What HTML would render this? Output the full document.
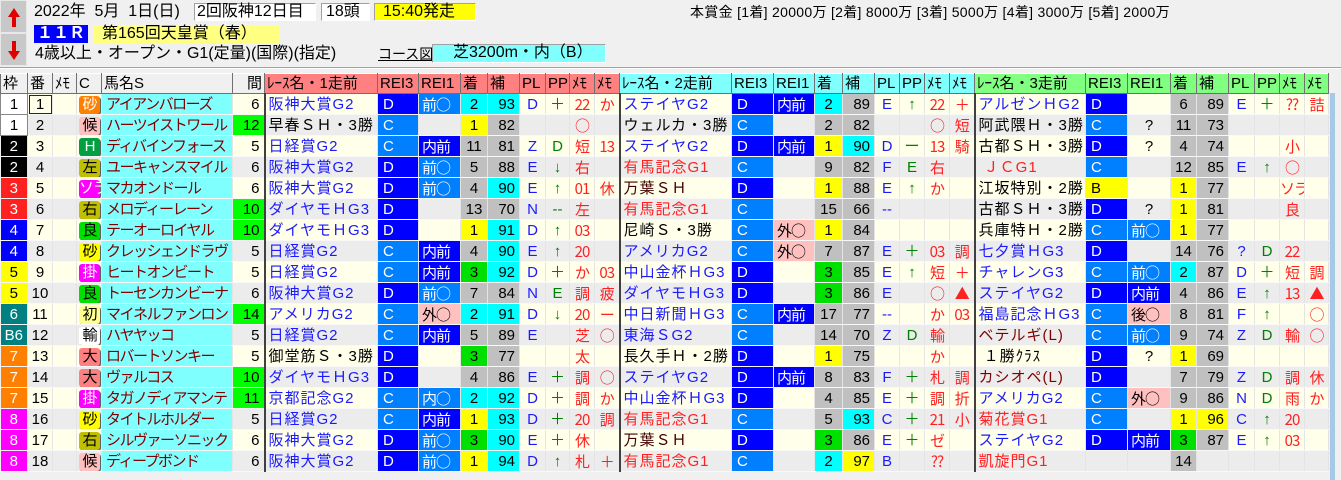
<!DOCTYPE html>
<html><head><meta charset="utf-8"><style>
*{margin:0;padding:0;box-sizing:border-box}
body{width:1341px;height:480px;overflow:hidden;background:#f0f0f0;font-family:"Liberation Sans","Noto Sans CJK JP",sans-serif;font-size:15px;color:#000;position:relative}
.a{position:absolute;white-space:nowrap}
.box{position:absolute;border-top:1px solid #a0a0a0;border-left:1px solid #a0a0a0;border-bottom:1px solid #fff;border-right:1px solid #fff;line-height:16px;white-space:nowrap;font-size:16px}
table{position:absolute;left:0;top:73px;width:1328px;table-layout:fixed;border-collapse:collapse}
td,th{height:21px;line-height:19px;padding:0 2px;white-space:nowrap;overflow:hidden;border-right:1px solid #e4e4e4;border-bottom:1px solid #f8f8f8;font-weight:normal}
th{height:20px;text-align:left;border:1px solid #707070;border-top:1px solid #fff;font-size:15px}
tr.o td{background:#ffffea}tr.e td{background:#ececec}
th.h0{background:#f0f0f0}th.h1{background:#ff8080}th.h2{background:#80ffff}th.h3{background:#80ff80}
td.c{text-align:center}td.r{text-align:right;padding-right:4px}
tr td.w1{background:#fff;text-align:center;border:1px solid #888}
tr td.w2{background:#000;color:#fff;text-align:center}
tr td.w3{background:#ff2020;color:#fff;text-align:center}
tr td.w4{background:#0000ff;color:#fff;text-align:center}
tr td.w5{background:#ffff00;text-align:center}
tr td.w6{background:#008080;color:#fff;text-align:center}
tr td.w7{background:#ff8000;color:#fff;text-align:center}
tr td.w8{background:#ff00ff;color:#fff;text-align:center}
tr td.n{background:#80ffff;color:#800000;letter-spacing:-1.5px;padding-left:4px}
tr td.g{background:#00ff00}
td.rn{border-left:2px solid #404040;letter-spacing:1px;padding-left:3px}
.bl{color:#1a1aff}.rd{color:#ff2020}.dr{color:#800000}.br{color:#400000}
tr td.D{background:#0000ff;color:#fff;padding-left:5px}
tr td.C{background:#0080ff;color:#fff;padding-left:5px}
tr td.B{background:#ffff00;padding-left:5px}
tr td.m,tr td.u,tr td.s{font-family:"Noto Sans CJK JP",sans-serif;padding-left:3px;letter-spacing:-1px}
tr td.m{background:#0080ff;color:#fff}
tr td.u{background:#0000ff;color:#fff}
tr td.s{background:#ffc0c0}
tr td.gy{background:#c0c0c0}tr td.cy{background:#00ffff}tr td.ye{background:#ffff00}tr td.gr{background:#00e000}
td.pl{color:#1a1aff;text-align:center}td.pp{color:#008000;text-align:center}td.me{color:#ff2020;text-align:center;padding:0;font-family:"Noto Sans CJK JP",sans-serif;letter-spacing:-1px}
.bd{display:inline-block;width:21px;height:18px;line-height:17px;text-align:center;border-radius:3px;box-shadow:1px 1px 0 #606060;font-size:15px;letter-spacing:-1px}
.b1{background:#ff8000;color:#fff}.b2{background:#ffc0c0;color:#000}.b3{background:#00a040;color:#fff}.b4{background:#c0c000}.b5{background:#ff00ff;color:#fff}.b6{background:#00e000}.b7{background:#ffff00}.b8{background:#ffff90}.b9{background:#fff}.b10{background:#ff8080}
</style></head><body>
<div class="a" style="left:0;top:0;width:27px;height:33px;background:#c8c8c8;border:1px solid #e8e8e8"><svg width="27" height="33"><path d="M13 7 L19 16 L15 16 L15 26 L11 26 L11 16 L7 16 Z" fill="#e00000"/></svg></div>
<div class="a" style="left:0;top:33px;width:27px;height:33px;background:#c8c8c8;border:1px solid #e8e8e8"><svg width="27" height="33"><path d="M13 26 L19 17 L15 17 L15 7 L11 7 L11 17 L7 17 Z" fill="#e00000"/></svg></div>
<div class="a" style="left:34px;top:3px;line-height:17px;font-size:16px">2022年&nbsp; 5月&nbsp; 1日(日)</div>
<div class="box" style="left:194px;top:3px;width:122px;height:18px;background:#fff;padding-left:2px">2回阪神12日目</div>
<div class="box" style="left:321px;top:3px;width:49px;height:18px;background:#fff;padding-left:4px">18頭</div>
<div class="box" style="left:374px;top:3px;width:102px;height:18px;background:#ffff00;padding-left:8px">15:40発走</div>
<div class="a" style="left:34px;top:25px;width:54px;height:18px;background:#0000ff;color:#fff;font-weight:bold;line-height:18px;padding-left:3px;font-size:16px">１１Ｒ</div>
<div class="a" style="left:94px;top:25px;width:185px;height:18px;background:#ffff80;line-height:18px;padding-left:8px;font-size:16px">第165回天皇賞（春）</div>
<div class="a" style="left:35px;top:45px;line-height:17px;font-size:16px">4歳以上・オープン・G1(定量)(国際)(指定)</div>
<div class="a" style="left:378px;top:47px;font-size:14px;text-decoration:underline;line-height:15px">コース図</div>
<div class="box" style="left:432px;top:44px;width:174px;height:19px;background:#80ffff;padding-left:20px">芝3200m・内（B）</div>
<div class="a" style="left:690px;top:4px;font-size:14px;line-height:16px;letter-spacing:0.3px">本賞金 [1着] 20000万 [2着] 8000万 [3着] 5000万 [4着] 3000万 [5着] 2000万</div>
<div class="a" style="left:0;top:67px;width:1341px;height:2px;border-top:1px solid #a0a0a0;border-bottom:1px solid #fff"></div>
<div class="a" style="left:1328px;top:73px;width:13px;height:407px;background:#f0f0f0"><div style="position:absolute;left:2px;top:20px;width:5px;height:387px;background:#a8c8e8"></div></div>
<table>
<colgroup><col style="width:27px"><col style="width:25px"><col style="width:24px"><col style="width:25px"><col style="width:131px"><col style="width:32px"><col style="width:113px"><col style="width:41px"><col style="width:42px"><col style="width:27px"><col style="width:32px"><col style="width:26px"><col style="width:24px"><col style="width:25px"><col style="width:25px"><col style="width:112px"><col style="width:42px"><col style="width:41px"><col style="width:28px"><col style="width:32px"><col style="width:25px"><col style="width:25px"><col style="width:25px"><col style="width:25px"><col style="width:111px"><col style="width:42px"><col style="width:43px"><col style="width:26px"><col style="width:32px"><col style="width:26px"><col style="width:25px"><col style="width:25px"><col style="width:24px"></colgroup>
<tr><th class="h0">枠</th><th class="h0">番</th><th class="h0">ﾒﾓ</th><th class="h0">C</th><th class="h0">馬名S</th><th class="h0" style="text-align:right">間</th><th class="h1">ﾚｰｽ名・1走前</th><th class="h1">REI3</th><th class="h1">REI1</th><th class="h1">着</th><th class="h1">補</th><th class="h1">PL</th><th class="h1">PP</th><th class="h1">ﾒﾓ</th><th class="h1">ﾒﾓ</th><th class="h2">ﾚｰｽ名・2走前</th><th class="h2">REI3</th><th class="h2">REI1</th><th class="h2">着</th><th class="h2">補</th><th class="h2">PL</th><th class="h2">PP</th><th class="h2">ﾒﾓ</th><th class="h2">ﾒﾓ</th><th class="h3">ﾚｰｽ名・3走前</th><th class="h3">REI3</th><th class="h3">REI1</th><th class="h3">着</th><th class="h3">補</th><th class="h3">PL</th><th class="h3">PP</th><th class="h3">ﾒﾓ</th><th class="h3">ﾒﾓ</th></tr>
<tr class="o"><td class="w1">1</td><td class="c" style="outline:1px solid #800000;outline-offset:-2px">1</td><td></td><td><span class="bd b1">砂</span></td><td class="n">アイアンバローズ</td><td class="r">6</td><td class="rn bl">阪神大賞G2</td><td class="D">D</td><td class="m">前○</td><td class="c cy">2</td><td class="r cy">93</td><td class="pl">D</td><td class="pp">＋</td><td class="me">22</td><td class="me">か</td><td class="rn bl">ステイヤG2</td><td class="D">D</td><td class="u">内前</td><td class="c cy">2</td><td class="r gy">89</td><td class="pl">E</td><td class="pp">↑</td><td class="me">22</td><td class="me">＋</td><td class="rn bl">アルゼンＨG2</td><td class="D">D</td><td></td><td class="c gy">6</td><td class="r gy">89</td><td class="pl">E</td><td class="pp">＋</td><td class="me">??</td><td class="me">詰</td></tr>
<tr class="e"><td class="w1">1</td><td class="c">2</td><td></td><td><span class="bd b2">候</span></td><td class="n">ハーツイストワール</td><td class="r g">12</td><td class="rn">早春ＳＨ・3勝</td><td class="C">C</td><td></td><td class="c ye">1</td><td class="r gy">82</td><td></td><td></td><td class="me">○</td><td></td><td class="rn">ウェルカ・3勝</td><td class="C">C</td><td></td><td class="c gy">2</td><td class="r gy">82</td><td></td><td></td><td class="me">○</td><td class="me">短</td><td class="rn">阿武隈Ｈ・3勝</td><td class="C">C</td><td class="c">?</td><td class="c gy">11</td><td class="r gy">73</td><td></td><td></td><td></td><td></td></tr>
<tr class="o"><td class="w2">2</td><td class="c">3</td><td></td><td><span class="bd b3">H</span></td><td class="n">ディバインフォース</td><td class="r">5</td><td class="rn bl">日経賞G2</td><td class="C">C</td><td class="u">内前</td><td class="c gy">11</td><td class="r gy">81</td><td class="pl">Z</td><td class="pp">D</td><td class="me">短</td><td class="me">13</td><td class="rn bl">ステイヤG2</td><td class="D">D</td><td class="u">内前</td><td class="c ye">1</td><td class="r cy">90</td><td class="pl">D</td><td class="pp">ー</td><td class="me">13</td><td class="me">騎</td><td class="rn">古都ＳＨ・3勝</td><td class="D">D</td><td class="c">?</td><td class="c gy">4</td><td class="r gy">74</td><td></td><td></td><td class="me">小</td><td></td></tr>
<tr class="e"><td class="w2">2</td><td class="c">4</td><td></td><td><span class="bd b4">左</span></td><td class="n">ユーキャンスマイル</td><td class="r">6</td><td class="rn bl">阪神大賞G2</td><td class="D">D</td><td class="m">前○</td><td class="c gy">5</td><td class="r gy">88</td><td class="pl">E</td><td class="pp">↓</td><td class="me">右</td><td></td><td class="rn rd">有馬記念G1</td><td class="C">C</td><td></td><td class="c gy">9</td><td class="r gy">82</td><td class="pl">F</td><td class="pp">E</td><td class="me">右</td><td></td><td class="rn rd">&nbsp;ＪＣG1</td><td class="C">C</td><td></td><td class="c gy">12</td><td class="r gy">85</td><td class="pl">E</td><td class="pp">↑</td><td class="me">○</td><td></td></tr>
<tr class="o"><td class="w3">3</td><td class="c">5</td><td></td><td><span class="bd b5">ソラ</span></td><td class="n">マカオンドール</td><td class="r">6</td><td class="rn bl">阪神大賞G2</td><td class="D">D</td><td class="m">前○</td><td class="c gy">4</td><td class="r cy">90</td><td class="pl">E</td><td class="pp">↑</td><td class="me">01</td><td class="me">休</td><td class="rn br">万葉ＳＨ</td><td class="D">D</td><td></td><td class="c ye">1</td><td class="r gy">88</td><td class="pl">E</td><td class="pp">↑</td><td class="me">か</td><td></td><td class="rn">江坂特別・2勝</td><td class="B">B</td><td></td><td class="c ye">1</td><td class="r gy">77</td><td></td><td></td><td class="me">ソラ</td><td></td></tr>
<tr class="e"><td class="w3">3</td><td class="c">6</td><td></td><td><span class="bd b4">右</span></td><td class="n">メロディーレーン</td><td class="r g">10</td><td class="rn bl">ダイヤモＨG3</td><td class="D">D</td><td></td><td class="c gy">13</td><td class="r gy">70</td><td class="pl">N</td><td class="pp">--</td><td class="me">左</td><td></td><td class="rn rd">有馬記念G1</td><td class="C">C</td><td></td><td class="c gy">15</td><td class="r gy">66</td><td class="pl">--</td><td></td><td></td><td></td><td class="rn">古都ＳＨ・3勝</td><td class="D">D</td><td class="c">?</td><td class="c ye">1</td><td class="r gy">81</td><td></td><td></td><td class="me">良</td><td></td></tr>
<tr class="o"><td class="w4">4</td><td class="c">7</td><td></td><td><span class="bd b6">良</span></td><td class="n">テーオーロイヤル</td><td class="r g">10</td><td class="rn bl">ダイヤモＨG3</td><td class="D">D</td><td></td><td class="c ye">1</td><td class="r cy">91</td><td class="pl">D</td><td class="pp">↑</td><td class="me">03</td><td></td><td class="rn">尼崎Ｓ・3勝</td><td class="C">C</td><td class="s">外○</td><td class="c ye">1</td><td class="r gy">84</td><td></td><td></td><td></td><td></td><td class="rn">兵庫特Ｈ・2勝</td><td class="C">C</td><td class="m">前○</td><td class="c ye">1</td><td class="r gy">77</td><td></td><td></td><td></td><td></td></tr>
<tr class="e"><td class="w4">4</td><td class="c">8</td><td></td><td><span class="bd b7">砂</span></td><td class="n">クレッシェンドラヴ</td><td class="r">5</td><td class="rn bl">日経賞G2</td><td class="C">C</td><td class="u">内前</td><td class="c gy">4</td><td class="r cy">90</td><td class="pl">E</td><td class="pp">↑</td><td class="me">20</td><td></td><td class="rn bl">アメリカG2</td><td class="C">C</td><td class="s">外○</td><td class="c gy">7</td><td class="r gy">87</td><td class="pl">E</td><td class="pp">＋</td><td class="me">03</td><td class="me">調</td><td class="rn bl">七夕賞ＨG3</td><td class="D">D</td><td></td><td class="c gy">14</td><td class="r gy">76</td><td class="pl">?</td><td class="pp">D</td><td class="me">22</td><td></td></tr>
<tr class="o"><td class="w5">5</td><td class="c">9</td><td></td><td><span class="bd b5">掛</span></td><td class="n">ヒートオンビート</td><td class="r">5</td><td class="rn bl">日経賞G2</td><td class="C">C</td><td class="u">内前</td><td class="c gr">3</td><td class="r cy">92</td><td class="pl">D</td><td class="pp">＋</td><td class="me">か</td><td class="me">03</td><td class="rn bl">中山金杯ＨG3</td><td class="D">D</td><td></td><td class="c gr">3</td><td class="r gy">85</td><td class="pl">E</td><td class="pp">↑</td><td class="me">短</td><td class="me">＋</td><td class="rn bl">チャレンG3</td><td class="C">C</td><td class="m">前○</td><td class="c cy">2</td><td class="r gy">87</td><td class="pl">D</td><td class="pp">＋</td><td class="me">短</td><td class="me">調</td></tr>
<tr class="e"><td class="w5">5</td><td class="c">10</td><td></td><td><span class="bd b6">良</span></td><td class="n">トーセンカンビーナ</td><td class="r">6</td><td class="rn bl">阪神大賞G2</td><td class="D">D</td><td class="m">前○</td><td class="c gy">7</td><td class="r gy">84</td><td class="pl">N</td><td class="pp">E</td><td class="me">調</td><td class="me">疲</td><td class="rn bl">ダイヤモＨG3</td><td class="D">D</td><td></td><td class="c gr">3</td><td class="r gy">86</td><td class="pl">E</td><td></td><td class="me">○</td><td class="me">▲</td><td class="rn bl">ステイヤG2</td><td class="D">D</td><td class="u">内前</td><td class="c gy">4</td><td class="r gy">86</td><td class="pl">E</td><td class="pp">↑</td><td class="me">13</td><td class="me">▲</td></tr>
<tr class="o"><td class="w6">6</td><td class="c">11</td><td></td><td><span class="bd b8">初</span></td><td class="n">マイネルファンロン</td><td class="r g">14</td><td class="rn bl">アメリカG2</td><td class="C">C</td><td class="s">外○</td><td class="c cy">2</td><td class="r cy">91</td><td class="pl">D</td><td class="pp">↓</td><td class="me">20</td><td class="me">ー</td><td class="rn bl">中日新聞ＨG3</td><td class="C">C</td><td class="u">内前</td><td class="c gy">17</td><td class="r gy">77</td><td class="pl">--</td><td></td><td class="me">か</td><td class="me">03</td><td class="rn bl">福島記念ＨG3</td><td class="C">C</td><td class="s">後○</td><td class="c gy">8</td><td class="r gy">81</td><td class="pl">F</td><td class="pp">↑</td><td></td><td class="me">○</td></tr>
<tr class="e"><td class="w6">B6</td><td class="c">12</td><td></td><td><span class="bd b9">輸</span></td><td class="n">ハヤヤッコ</td><td class="r">5</td><td class="rn bl">日経賞G2</td><td class="C">C</td><td class="u">内前</td><td class="c gy">5</td><td class="r gy">89</td><td class="pl">E</td><td></td><td class="me">芝</td><td class="me">○</td><td class="rn bl">東海ＳG2</td><td class="C">C</td><td></td><td class="c gy">14</td><td class="r gy">70</td><td class="pl">Z</td><td class="pp">D</td><td class="me">輸</td><td></td><td class="rn dr">ベテルギ(L)</td><td class="C">C</td><td class="m">前○</td><td class="c gy">9</td><td class="r gy">74</td><td class="pl">Z</td><td class="pp">D</td><td class="me">輸</td><td class="me">○</td></tr>
<tr class="o"><td class="w7">7</td><td class="c">13</td><td></td><td><span class="bd b10">大</span></td><td class="n">ロバートソンキー</td><td class="r">5</td><td class="rn">御堂筋Ｓ・3勝</td><td class="D">D</td><td></td><td class="c gr">3</td><td class="r gy">77</td><td></td><td></td><td class="me">太</td><td></td><td class="rn">長久手Ｈ・2勝</td><td class="D">D</td><td></td><td class="c ye">1</td><td class="r gy">75</td><td></td><td></td><td class="me">か</td><td></td><td class="rn">&nbsp;１勝ｸﾗｽ</td><td class="D">D</td><td class="c">?</td><td class="c ye">1</td><td class="r gy">69</td><td></td><td></td><td></td><td></td></tr>
<tr class="e"><td class="w7">7</td><td class="c">14</td><td></td><td><span class="bd b10">大</span></td><td class="n">ヴァルコス</td><td class="r g">10</td><td class="rn bl">ダイヤモＨG3</td><td class="D">D</td><td></td><td class="c gy">4</td><td class="r gy">86</td><td class="pl">E</td><td class="pp">＋</td><td class="me">調</td><td class="me">○</td><td class="rn bl">ステイヤG2</td><td class="D">D</td><td class="u">内前</td><td class="c gy">8</td><td class="r gy">83</td><td class="pl">F</td><td class="pp">＋</td><td class="me">札</td><td class="me">調</td><td class="rn dr">カシオペ(L)</td><td class="D">D</td><td></td><td class="c gy">7</td><td class="r gy">79</td><td class="pl">Z</td><td class="pp">D</td><td class="me">調</td><td class="me">休</td></tr>
<tr class="o"><td class="w7">7</td><td class="c">15</td><td></td><td><span class="bd b5">掛</span></td><td class="n">タガノディアマンテ</td><td class="r g">11</td><td class="rn bl">京都記念G2</td><td class="C">C</td><td class="m">内○</td><td class="c cy">2</td><td class="r cy">92</td><td class="pl">D</td><td class="pp">＋</td><td class="me">調</td><td class="me">か</td><td class="rn bl">中山金杯ＨG3</td><td class="D">D</td><td></td><td class="c gy">4</td><td class="r gy">85</td><td class="pl">E</td><td class="pp">＋</td><td class="me">調</td><td class="me">折</td><td class="rn bl">アメリカG2</td><td class="C">C</td><td class="s">外○</td><td class="c gy">9</td><td class="r gy">86</td><td class="pl">N</td><td class="pp">D</td><td class="me">雨</td><td class="me">か</td></tr>
<tr class="e"><td class="w8">8</td><td class="c">16</td><td></td><td><span class="bd b7">砂</span></td><td class="n">タイトルホルダー</td><td class="r">5</td><td class="rn bl">日経賞G2</td><td class="C">C</td><td class="u">内前</td><td class="c ye">1</td><td class="r cy">93</td><td class="pl">D</td><td class="pp">＋</td><td class="me">20</td><td class="me">調</td><td class="rn rd">有馬記念G1</td><td class="C">C</td><td></td><td class="c gy">5</td><td class="r cy">93</td><td class="pl">C</td><td class="pp">＋</td><td class="me">21</td><td class="me">小</td><td class="rn rd">菊花賞G1</td><td class="C">C</td><td></td><td class="c ye">1</td><td class="r ye">96</td><td class="pl">C</td><td class="pp">↑</td><td class="me">20</td><td></td></tr>
<tr class="o"><td class="w8">8</td><td class="c">17</td><td></td><td><span class="bd b4">右</span></td><td class="n">シルヴァーソニック</td><td class="r">6</td><td class="rn bl">阪神大賞G2</td><td class="D">D</td><td class="m">前○</td><td class="c gr">3</td><td class="r cy">90</td><td class="pl">E</td><td class="pp">＋</td><td class="me">休</td><td></td><td class="rn br">万葉ＳＨ</td><td class="D">D</td><td></td><td class="c gr">3</td><td class="r gy">86</td><td class="pl">E</td><td class="pp">＋</td><td class="me">ゼ</td><td></td><td class="rn bl">ステイヤG2</td><td class="D">D</td><td class="u">内前</td><td class="c gr">3</td><td class="r gy">87</td><td class="pl">E</td><td class="pp">↑</td><td class="me">03</td><td></td></tr>
<tr class="e"><td class="w8">8</td><td class="c">18</td><td></td><td><span class="bd b2">候</span></td><td class="n">ディープボンド</td><td class="r">6</td><td class="rn bl">阪神大賞G2</td><td class="D">D</td><td class="m">前○</td><td class="c ye">1</td><td class="r cy">94</td><td class="pl">D</td><td class="pp">↑</td><td class="me">札</td><td class="me">＋</td><td class="rn rd">有馬記念G1</td><td class="C">C</td><td></td><td class="c cy">2</td><td class="r ye">97</td><td class="pl">B</td><td></td><td class="me">??</td><td></td><td class="rn rd">凱旋門G1</td><td></td><td></td><td class="c gy">14</td><td></td><td></td><td></td><td></td><td></td></tr>
</table>
</body></html>
